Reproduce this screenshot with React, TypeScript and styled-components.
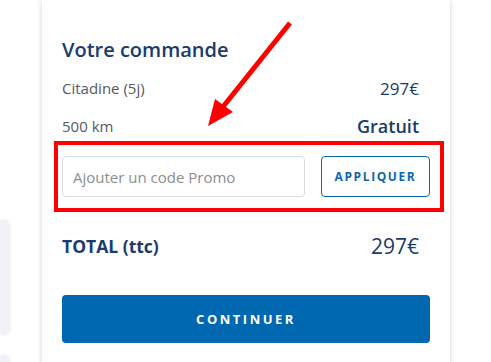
import styled, { createGlobalStyle } from "styled-components";

const GlobalStyle = createGlobalStyle`
  html, body {
    margin: 0;
    padding: 0;
    background: #ffffff;
    overflow: hidden;
  }
  body {
    font-family: "Open Sans", "Noto Sans", sans-serif;
  }
`;

const lines = [
  { label: "Citadine (5j)", value: "297€", strong: false },
  { label: "500 km", value: "Gratuit", strong: true },
];

const App = () => {
  return (
    <Page>
      <GlobalStyle />
      <Side>
        <SidePanel $height={113} $top={220} />
        <SidePanel $height={60} $top={22} />
      </Side>
      <Card>
        <Title>Votre commande</Title>
        {lines.map((line) => (
          <Line key={line.label}>
            <Label>{line.label}</Label>
            <Value $strong={line.strong}>{line.value}</Value>
          </Line>
        ))}
        <PromoRow>
          <PromoInput placeholder="Ajouter un code Promo" />
          <ApplyButton>Appliquer</ApplyButton>
          <Highlight />
        </PromoRow>
        <TotalLine>
          <TotalLabel>TOTAL (ttc)</TotalLabel>
          <TotalValue>297€</TotalValue>
        </TotalLine>
        <ContinueButton>Continuer</ContinueButton>
      </Card>
      <Arrow viewBox="0 0 491 362" aria-hidden="true">
        <line
          x1="290"
          y1="23"
          x2="222"
          y2="108"
          stroke="#ff0000"
          strokeWidth="5"
        />
        <polygon points="208,126 215,99 233,112" fill="#ff0000" />
      </Arrow>
    </Page>
  );
};

export default App;

const Page = styled.div`
  position: relative;
  width: 491px;
  height: 362px;
  display: grid;
  grid-template-columns: 9px 408px;
  column-gap: 33px;
  overflow: hidden;
`;

const Side = styled.div`
  display: flex;
  flex-direction: column;
`;

const SidePanel = styled.div<{ $height: number; $top: number }>`
  margin-top: ${(p) => p.$top}px;
  height: ${(p) => p.$height}px;
  background: #f1f1f7;
  border-radius: 0 5px 5px 0;
  box-shadow: 0 1px 4px rgba(0, 0, 0, 0.12);
  flex-shrink: 0;
`;

const Card = styled.div`
  background: #ffffff;
  height: 400px;
  padding: 36px 20px 0 20px;
  box-sizing: border-box;
  box-shadow: 0 0 5px rgba(0, 0, 0, 0.18);
  display: flex;
  flex-direction: column;
`;

const Title = styled.h2`
  margin: 0 0 5px;
  font-size: 20px;
  font-weight: 600;
  line-height: 28px;
  color: #1a3b6e;
`;

const Line = styled.div`
  display: flex;
  justify-content: space-between;
  align-items: center;
  height: 38px;
  padding-right: 11px;
`;

const Label = styled.span`
  font-size: 15px;
  color: #555a61;
`;

const Value = styled.span<{ $strong: boolean }>`
  font-size: ${(p) => (p.$strong ? "18px" : "17px")};
  font-weight: ${(p) => (p.$strong ? 600 : 500)};
  color: #1a3b6e;
`;

const PromoRow = styled.div`
  position: relative;
  display: flex;
  gap: 16px;
  margin-top: 11px;
  height: 41px;
`;

const PromoInput = styled.input`
  flex: 1;
  min-width: 0;
  height: 41px;
  box-sizing: border-box;
  border: 1px solid #dcdde0;
  border-radius: 4px;
  padding: 0 10px;
  font-family: "Open Sans", sans-serif;
  font-size: 15px;
  color: #333;
  outline: none;
  &::placeholder {
    color: #8b8d91;
  }
`;

const ApplyButton = styled.button`
  width: 109px;
  height: 41px;
  background: #ffffff;
  border: 1px solid #0a66b0;
  border-radius: 4px;
  color: #0a66b0;
  font-family: "Open Sans", sans-serif;
  font-size: 12px;
  font-weight: 700;
  letter-spacing: 1.6px;
  text-transform: uppercase;
  cursor: pointer;
`;

const Highlight = styled.div`
  position: absolute;
  top: -15px;
  left: -8px;
  right: -14px;
  bottom: -15px;
  border: 4px solid #ff0000;
  pointer-events: none;
`;

const TotalLine = styled.div`
  display: flex;
  justify-content: space-between;
  align-items: center;
  margin-top: 32px;
  height: 34px;
  padding-right: 11px;
`;

const TotalLabel = styled.span`
  font-size: 17.5px;
  font-weight: 700;
  color: #1a3b6e;
`;

const TotalValue = styled.span`
  font-size: 21px;
  font-weight: 500;
  color: #1a3b6e;
`;

const ContinueButton = styled.button`
  margin-top: 32px;
  height: 48px;
  background: #0067b1;
  border: 0;
  border-radius: 4px;
  color: #ffffff;
  font-family: "Open Sans", sans-serif;
  font-size: 13px;
  font-weight: 700;
  letter-spacing: 2.5px;
  text-transform: uppercase;
  cursor: pointer;
`;

const Arrow = styled.svg`
  position: absolute;
  left: 0;
  top: 0;
  width: 491px;
  height: 362px;
  pointer-events: none;
`;
